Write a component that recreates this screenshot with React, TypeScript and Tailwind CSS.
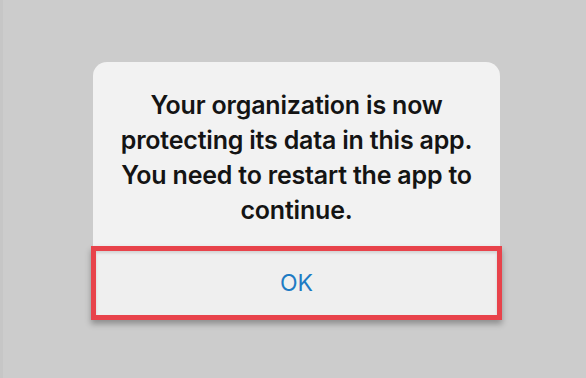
import React from 'react';

const App: React.FC = () => {
  return (
    <div className="w-[586px] h-[378px] bg-[#cccccc] border-l-[3px] border-[#c6c6c6] overflow-hidden" style={{ fontFamily: 'Inter, "Noto Sans", sans-serif' }}>
      <div className="pt-[62px] pl-[90px]">
        <div className="w-[407px] bg-[#f2f2f2] rounded-t-[14px]">
          <p className="pt-[26px] pb-[18px] text-center text-[25px] leading-[35px] font-semibold tracking-[-0.2px] text-[#141414] whitespace-nowrap">
            Your organization is now
            <br />
            protecting its data in this app.
            <br />
            You need to restart the app to
            <br />
            continue.
          </p>
          <div className="-mx-[2px] h-[74px] border-[5px] border-[#e8434b] bg-[#efefef] shadow-[0_4px_6px_rgba(0,0,0,0.3),inset_0_2px_3px_rgba(0,0,0,0.12)] flex items-center justify-center">
            <span className="text-[23px] text-[#1e7bc4]">OK</span>
          </div>
        </div>
      </div>
    </div>
  );
};

export default App;
